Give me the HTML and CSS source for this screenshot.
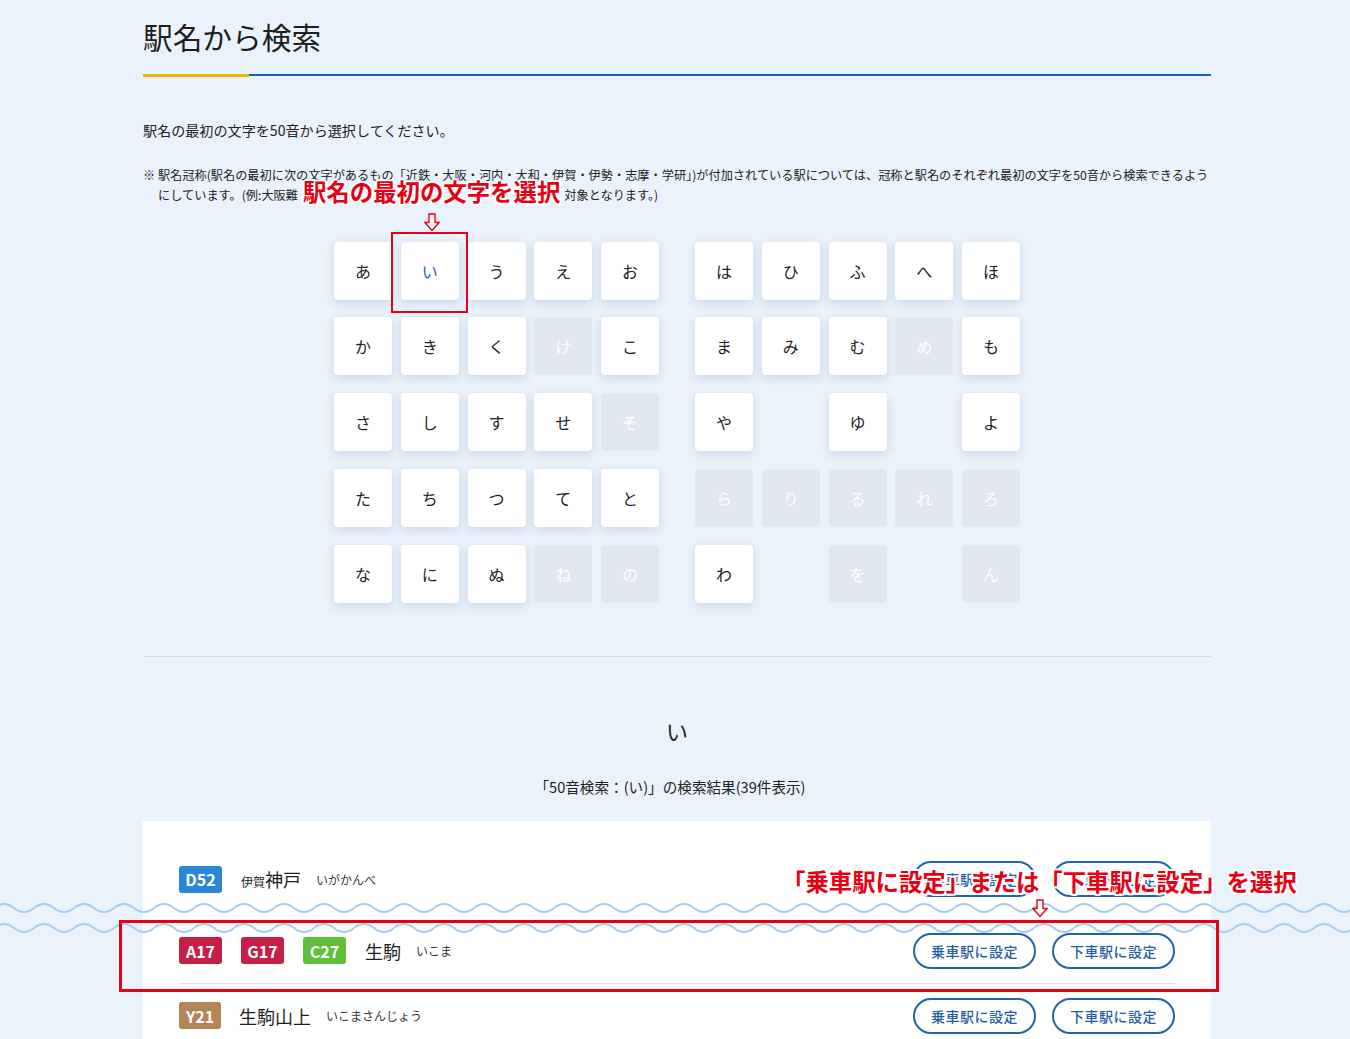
FILE: index.html
```html
<!DOCTYPE html>
<html lang="ja">
<head>
<meta charset="utf-8">
<title>駅名から検索</title>
<link rel="stylesheet" href="styles.css">
</head>
<body>
<div class="page">
  <h1 class="title">駅名から検索</h1>
  <p class="lead">駅名の最初の文字を50音から選択してください。</p>
  <p class="note">※ 駅名冠称(駅名の最初に次の文字があるもの「近鉄・大阪・河内・大和・伊賀・伊勢・志摩・学研」)が付加されている駅については、冠称と駅名のそれぞれ最初の文字を50音から検索できるよう<br>にしています。(例:大阪難<span class="mark mark-inline">駅名の最初の文字を選択</span>対象となります。)</p>

  <div class="kana-board">
    <div class="kana-block">
      <button class="key">あ</button>
      <button class="key on">い
        <span class="anno-box box1"></span>
        <svg class="anno-arrow arrow1" width="16" height="19" viewBox="0 0 16 19"><polygon points="5,1 11,1 11,9.5 15,9.5 8,17.5 1,9.5 5,9.5" fill="#fff" stroke="#e60012" stroke-width="1.4" stroke-linejoin="miter"/></svg>
      </button>
      <button class="key">う</button>
      <button class="key">え</button>
      <button class="key">お</button>

      <button class="key">か</button>
      <button class="key">き</button>
      <button class="key">く</button>
      <button class="key off">け</button>
      <button class="key">こ</button>

      <button class="key">さ</button>
      <button class="key">し</button>
      <button class="key">す</button>
      <button class="key">せ</button>
      <button class="key off">そ</button>

      <button class="key">た</button>
      <button class="key">ち</button>
      <button class="key">つ</button>
      <button class="key">て</button>
      <button class="key">と</button>

      <button class="key">な</button>
      <button class="key">に</button>
      <button class="key">ぬ</button>
      <button class="key off">ね</button>
      <button class="key off">の</button>
    </div>
    <div class="kana-block">
      <button class="key">は</button>
      <button class="key">ひ</button>
      <button class="key">ふ</button>
      <button class="key">へ</button>
      <button class="key">ほ</button>

      <button class="key">ま</button>
      <button class="key">み</button>
      <button class="key">む</button>
      <button class="key off">め</button>
      <button class="key">も</button>

      <button class="key">や</button>
      <span class="key empty"></span>
      <button class="key">ゆ</button>
      <span class="key empty"></span>
      <button class="key">よ</button>

      <button class="key off">ら</button>
      <button class="key off">り</button>
      <button class="key off">る</button>
      <button class="key off">れ</button>
      <button class="key off">ろ</button>

      <button class="key">わ</button>
      <span class="key empty"></span>
      <button class="key off">を</button>
      <span class="key empty"></span>
      <button class="key off">ん</button>
    </div>
  </div>

  <div class="rule"></div>

  <h2 class="initial">い</h2>
  <p class="count">「50音検索：(い)」の検索結果(39件表示)</p>

  <div class="card">
    <div class="row">
      <div class="badges"><span class="badge c-blue">D52</span></div>
      <div class="name"><small>伊賀</small>神戸</div>
      <div class="yomi">いがかんべ</div>
      <div class="actions"><button class="btn">乗車駅に設定</button><button class="btn">下車駅に設定</button></div>
      <div class="mark mark-float">「乗車駅に設定」または「下車駅に設定」を選択</div>
      <svg class="anno-arrow arrow2" width="16" height="19" viewBox="0 0 16 19"><polygon points="5,1 11,1 11,9.5 15,9.5 8,17.5 1,9.5 5,9.5" fill="#fff" stroke="#e60012" stroke-width="1.4"/></svg>
    </div>
    <div class="row cut line">
      <div class="badges"><span class="badge c-red">A17</span><span class="badge c-red">G17</span><span class="badge c-green">C27</span></div>
      <div class="name">生駒</div>
      <div class="yomi">いこま</div>
      <div class="actions"><button class="btn">乗車駅に設定</button><button class="btn">下車駅に設定</button></div>
      <span class="anno-box box2"></span>
    </div>
    <div class="row line">
      <div class="badges"><span class="badge c-brown">Y21</span></div>
      <div class="name name-tight">生駒山上</div>
      <div class="yomi">いこまさんじょう</div>
      <div class="actions"><button class="btn">乗車駅に設定</button><button class="btn">下車駅に設定</button></div>
    </div>
  </div>
</div>

<svg class="wave wave1" width="1350" height="12" viewBox="0 0 1350 12"><defs><pattern id="wv1" x="-6" width="40" height="12" patternUnits="userSpaceOnUse"><path d="M0 6 Q10 -2 20 6 T40 6" fill="none" stroke="#a4cbf5" stroke-width="2"/></pattern></defs><rect width="1350" height="12" fill="url(#wv1)"/></svg>
<svg class="wave wave2" width="1350" height="12" viewBox="0 0 1350 12"><defs><pattern id="wv2" x="-6" width="40" height="12" patternUnits="userSpaceOnUse"><path d="M0 6 Q10 -2 20 6 T40 6" fill="none" stroke="#a4cbf5" stroke-width="2"/></pattern></defs><rect width="1350" height="12" fill="url(#wv2)"/></svg>
</body>
</html>
```
FILE: styles.css
```css
* { box-sizing: border-box; margin: 0; padding: 0; }
html, body { background: #eaf2fb; }
body {
  font-family: "Noto Sans CJK JP", "Noto Sans", sans-serif;
  color: #222;
  overflow: hidden;
}
.page {
  width: 1068px;
  margin-left: calc(50% - 532px);
}
.title {
  position: relative;
  font-size: 29.7px;
  font-weight: 400;
  line-height: 42px;
  padding: 16px 0;
  border-bottom: 2px solid #1a64b5;
  color: #1e1e1e;
}
.title::after {
  content: "";
  position: absolute;
  left: 0;
  bottom: -3px;
  width: 106px;
  height: 3px;
  background: #f4b400;
}
.lead {
  font-size: 14.1px;
  line-height: 20px;
  margin-top: 44px;
}
.note {
  font-size: 12.2px;
  line-height: 20px;
  margin-top: 25px;
  padding-left: 15px;
  text-indent: -15px;
}
.mark {
  color: #e60012;
  font-weight: 700;
  font-size: 23.4px;
  white-space: nowrap;
  text-shadow: 2px 0 #fff, -2px 0 #fff, 0 2px #fff, 0 -2px #fff,
    1.5px 1.5px #fff, -1.5px 1.5px #fff, 1.5px -1.5px #fff, -1.5px -1.5px #fff;
}
.mark-inline {
  line-height: 0;
  margin: 0 4px 0 5px;
  position: relative;
  top: 1px;
}
.mark-float {
  position: absolute;
  left: 603px;
  top: 19px;
  line-height: 30px;
  z-index: 5;
}
.kana-board {
  display: flex;
  justify-content: center;
  gap: 36px;
  margin-top: 36.7px;
}
.kana-block {
  display: grid;
  grid-template-columns: repeat(5, 58px);
  grid-auto-rows: 58px;
  gap: 17.75px 8.75px;
}
.key {
  border: 0;
  background: #fff;
  border-radius: 4px;
  box-shadow: 0 3px 10px rgba(70, 110, 160, 0.2);
  display: flex;
  align-items: center;
  justify-content: center;
  font-family: inherit;
  font-size: 16px;
  color: #222;
}
.key.off {
  background: #e2e8ef;
  box-shadow: none;
  color: #fff;
}
.key.empty {
  background: none;
  box-shadow: none;
}
.key.on {
  position: relative;
  color: #1e64b4;
}
.anno-box {
  position: absolute;
  border: 2.5px solid #e60012;
  pointer-events: none;
}
.box1 {
  left: -10px;
  top: -10px;
  width: 77px;
  height: 81px;
}
.anno-arrow {
  position: absolute;
  z-index: 6;
}
.arrow1 {
  left: 23px;
  top: -29px;
}
.arrow2 {
  left: 853px;
  top: 52px;
}
.rule {
  height: 1px;
  background: #d4dce5;
  margin-top: 53px;
}
.initial {
  text-align: center;
  font-size: 22px;
  font-weight: 400;
  line-height: 32px;
  margin-top: 57px;
}
.count {
  text-align: center;
  font-size: 14.6px;
  line-height: 20px;
  margin-top: 31px;
  padding-right: 14px;
}
.card {
  background: #fff;
  margin-top: 24.7px;
  padding: 25.5px 36px 40px;
}
.row {
  position: relative;
  display: flex;
  align-items: center;
  height: 65px;
}
.row.cut {
  margin-top: 7px;
}
.row.line {
  border-bottom: 1px solid #dce1e7;
}
.badges {
  display: flex;
  gap: 19px;
}
.badge {
  width: 43px;
  height: 27px;
  border-radius: 3px;
  color: #fff;
  font-weight: 700;
  font-size: 16px;
  line-height: 1;
  display: flex;
  align-items: center;
  justify-content: center;
}
.c-blue { background: #2b87d8; }
.c-red { background: #c51f48; }
.c-green { background: #5ebf3b; }
.c-brown { background: #b28559; width: 42px; }
.name {
  margin-left: 19px;
  font-size: 18px;
  color: #1e1e1e;
}
.name-tight { margin-left: 18px; }
.name small {
  font-size: 12px;
}
.yomi {
  margin-left: 15px;
  font-size: 12px;
  color: #333;
}
.actions {
  margin-left: auto;
  display: flex;
  gap: 16px;
}
.btn {
  width: 123px;
  height: 36px;
  border: 2px solid #1f64b1;
  border-radius: 18px;
  background: #fff;
  color: #1f5fa8;
  font-family: inherit;
  font-size: 14px;
  font-weight: 500;
  letter-spacing: 0.5px;
}
.box2 {
  left: -60px;
  top: 1.5px;
  width: 1100px;
  height: 72px;
  border-width: 3px;
  z-index: 4;
}
.wave {
  position: absolute;
  left: 0;
  width: 100%;
  z-index: 3;
  pointer-events: none;
}
.wave1 { top: 902px; }
.wave2 { top: 922px; }
```
